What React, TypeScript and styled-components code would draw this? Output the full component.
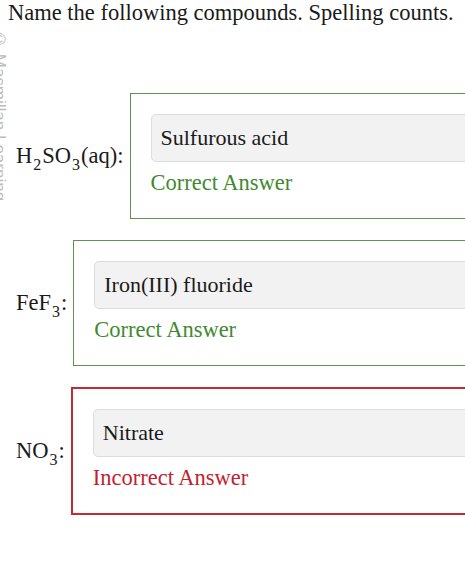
import React from "react";
import styled, { createGlobalStyle } from "styled-components";

const Global = createGlobalStyle`
  html, body {
    margin: 0;
    padding: 0;
    background: #ffffff;
    overflow: hidden;
  }
  body {
    font-family: "Liberation Serif", "Times New Roman", serif;
    color: #1a1a1a;
  }
`;

const Page = styled.div`
  position: relative;
  width: 465px;
  height: 561px;
  overflow: hidden;
`;

const Title = styled.div`
  font-size: 22.5px;
  line-height: 25px;
  padding-left: 8px;
  white-space: nowrap;
`;

const Watermark = styled.div`
  position: absolute;
  left: -11px;
  top: 30px;
  writing-mode: vertical-rl;
  font-family: "Liberation Sans", Arial, sans-serif;
  font-size: 17px;
  color: #bcbcbc;
  white-space: nowrap;
`;

const List = styled.div`
  display: flex;
  flex-direction: column;
  gap: 21px;
  margin-top: 68px;
`;

const Row = styled.div`
  display: flex;
  align-items: center;
  gap: 6px;
  padding-left: 16px;
`;

const Label = styled.div`
  font-size: 22.5px;
  line-height: 26px;
  white-space: nowrap;
  flex: 0 0 auto;

  sub {
    font-size: 16px;
    vertical-align: -7px;
    line-height: 0;
    margin: 0 1px;
  }
`;

const Box = styled.div<{ $ok: boolean }>`
  flex: 0 0 auto;
  width: 520px;
  padding: 20px;
  border-style: solid;
  border-width: ${(p) => (p.$ok ? "1px" : "2px")};
  border-color: ${(p) => (p.$ok ? "#5f9450" : "#c42a36")};
`;

const Field = styled.div`
  height: 48px;
  box-sizing: border-box;
  display: flex;
  align-items: center;
  padding-left: 9px;
  background: #f2f2f2;
  border: 1px solid #dcdcdc;
  border-radius: 5px;
  font-size: 22px;
  color: #1a1a1a;
`;

const Feedback = styled.div<{ $ok: boolean }>`
  margin-top: 6px;
  font-size: 22.5px;
  line-height: 30px;
  color: ${(p) => (p.$ok ? "#3f8a30" : "#c41e30")};
`;

type Item = { label: React.ReactNode; answer: string; ok: boolean };

const items: Item[] = [
  {
    label: (
      <>
        H<sub>2</sub>SO<sub>3</sub>(aq):
      </>
    ),
    answer: "Sulfurous acid",
    ok: true,
  },
  {
    label: (
      <>
        FeF<sub>3</sub>:
      </>
    ),
    answer: "Iron(III) fluoride",
    ok: true,
  },
  {
    label: (
      <>
        NO<sub>3</sub>:
      </>
    ),
    answer: "Nitrate",
    ok: false,
  },
];

export default function App() {
  return (
    <Page>
      <Global />
      <Watermark>© Macmillan Learning</Watermark>
      <Title>Name the following compounds. Spelling counts.</Title>
      <List>
        {items.map((it, i) => (
          <Row key={i}>
            <Label>{it.label}</Label>
            <Box $ok={it.ok}>
              <Field>{it.answer}</Field>
              <Feedback $ok={it.ok}>
                {it.ok ? "Correct Answer" : "Incorrect Answer"}
              </Feedback>
            </Box>
          </Row>
        ))}
      </List>
    </Page>
  );
}
